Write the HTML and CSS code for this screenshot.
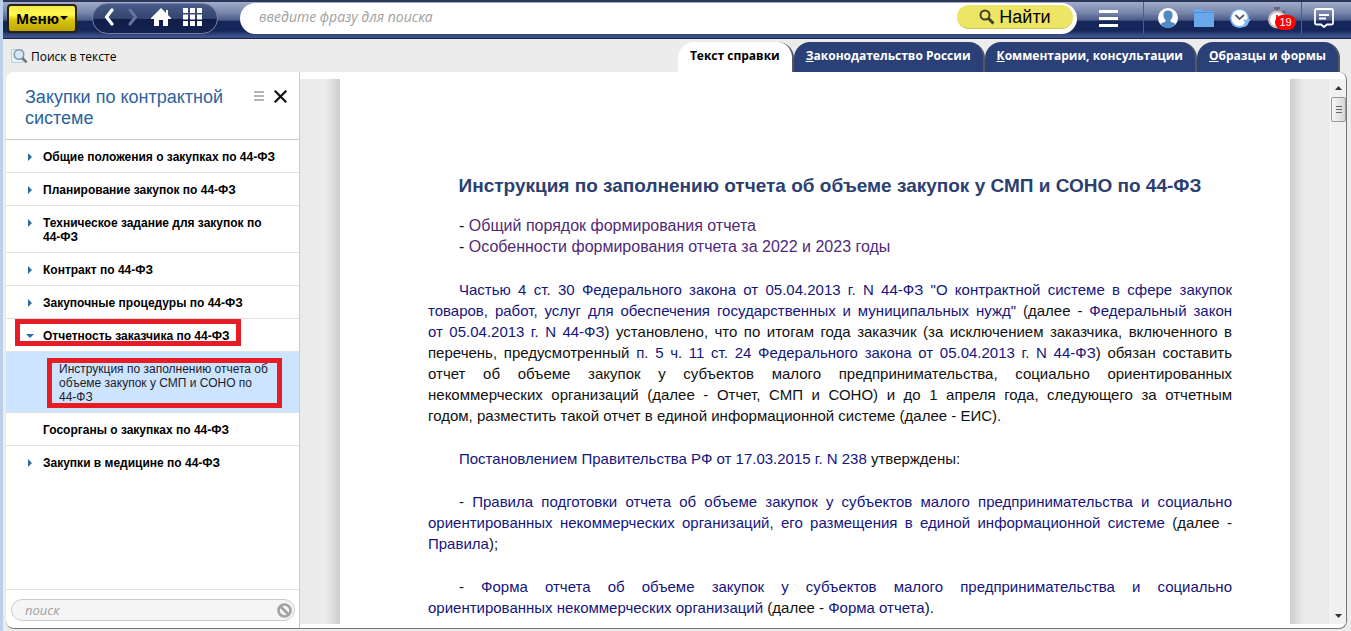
FILE: index.html
```html
<!DOCTYPE html>
<html lang="ru">
<head>
<meta charset="utf-8">
<title>Закупки по контрактной системе</title>
<link rel="stylesheet" href="styles.css">
</head>
<body>
<div class="app">
  <header class="topbar">
    <button class="menu-btn" type="button">Меню<svg width="8" height="4" viewBox="0 0 8 4" aria-hidden="true"><path d="M0 0h8L4 4z"/></svg></button>
    <nav class="nav-pill" aria-label="Навигация">
      <button type="button" aria-label="Назад"><svg width="12" height="18" viewBox="0 0 12 18"><path d="M9 2 3.500 9l5.500 7" fill="none" stroke="#fff" stroke-width="3.200" stroke-linecap="round" stroke-linejoin="round"/></svg></button>
      <button type="button" aria-label="Вперед"><svg width="12" height="18" viewBox="0 0 12 18"><path d="M3 2l5.500 7-5.500 7" fill="none" stroke="#66729a" stroke-width="3" stroke-linecap="round" stroke-linejoin="round"/></svg></button>
      <button type="button" aria-label="Домой"><svg width="20" height="18" viewBox="0 0 20 18"><path d="M10 0l5 5V2h2v5l3 3v1h-3v7h-5v-6H8v6H3v-7H0v-1z" fill="#fff"/></svg></button>
      <button type="button" aria-label="Разделы"><svg width="19" height="18" viewBox="0 0 19 18" fill="#fff"><path d="M0 0h5v5H0zM7 0h5v5H7zM14 0h5v5h-5zM0 6.500h5v5H0zM7 6.500h5v5H7zM14 6.500h5v5h-5zM0 13h5v5H0zM7 13h5v5H7zM14 13h5v5h-5z"/></svg></button>
    </nav>
    <form class="search">
      <input type="text" aria-label="Поиск" placeholder="введите фразу для поиска">
      <button type="button" class="find"><svg width="16" height="16" viewBox="0 0 16 16" aria-hidden="true"><circle cx="6" cy="6" r="4.500" fill="none" stroke="#41402a" stroke-width="2"/><path d="M9.500 9.500l5 5" stroke="#41402a" stroke-width="3"/></svg>Найти</button>
    </form>
    <div class="tools">
      <button type="button" class="t-list" aria-label="Список"><svg width="19" height="17" viewBox="0 0 19 17"><path d="M0 1.500h19M0 8.500h19M0 15.500h19" stroke="#fff" stroke-width="3"/></svg></button>
      <div class="group">
        <button type="button" aria-label="Профиль"><svg width="20" height="20" viewBox="0 0 20 20"><circle cx="10" cy="10" r="10" fill="#fff"/><path d="M10 2.500c3.200 0 5 2.200 4.500 5.500-.3 2-1 3-2 4v1.500l5 2.300A10 10 0 0 1 10 20a10 10 0 0 1-7.500-4.200l5-2.300V12c-1-1-1.700-2-2-4C5 4.700 6.800 2.500 10 2.500z" fill="#4f8ac4"/></svg></button>
        <button type="button" aria-label="Папки"><svg width="20" height="18" viewBox="0 0 20 18"><path d="M0 0h7l2 2h11v16H0z" fill="#6aa8ec"/><path d="M0 3.500h20" stroke="#4b8fd8"/></svg></button>
        <button type="button" aria-label="История"><svg width="21" height="19" viewBox="0 0 21 19"><circle cx="9.500" cy="9.500" r="9.500" fill="#7db6f3"/><circle cx="9.500" cy="9" r="8" fill="#fff"/><path d="M5.500 6l4 4 4.500-4" fill="none" stroke="#555f70" stroke-width="1.800"/><path d="M21 10l-8 1 2 2-2 4 2 1q3-1.500 4-5z" fill="#7db6f3"/></svg></button>
        <button type="button" class="timer" aria-label="Контроль"><svg width="20" height="22" viewBox="0 0 20 22"><path d="M7 1h6M10 1v4M16 4l2 2" stroke="#62666f" stroke-width="2.500"/><circle cx="10" cy="12.500" r="9" fill="#c9c4c0"/><circle cx="10" cy="12.500" r="6.800" fill="#fff"/><path d="M10 8v5" stroke="#a44" stroke-width="2"/></svg><span class="badge">19</span></button>
      </div>
      <button type="button" class="t-chat" aria-label="Сообщения"><svg width="20" height="20" viewBox="0 0 20 20"><path d="M2.500 1h15q1.500 0 1.500 1.500V15q0 1.500-1.500 1.500H13L10 19l-3-2.500H2.500Q1 16.500 1 15V2.500Q1 1 2.500 1zM5 7h10M5 10.500h7" fill="none" stroke="#fff" stroke-width="1.800"/></svg></button>
    </div>
  </header>

  <div class="subbar">
    <button type="button" class="text-search"><svg width="17" height="16" viewBox="0 0 17 16" aria-hidden="true"><path d="M.5 1.500h11v13H.5z" fill="#e9f2f5" stroke="#b9cdd4"/><circle cx="8" cy="6.500" r="4.800" fill="#d4e8f7" stroke="#8096a6" stroke-width="1.500"/><path d="M11.500 10l4 4.500" stroke="#6b7278" stroke-width="2.600"/></svg>Поиск в тексте</button>
    <nav class="tabs">
      <a href="#" class="tab active">Текст справки</a>
      <a href="#" class="tab"><u>З</u>аконодательство России</a>
      <a href="#" class="tab"><u>К</u>омментарии, консультации</a>
      <a href="#" class="tab"><u>О</u>бразцы и формы</a>
    </nav>
  </div>

  <div class="main">
    <aside class="side">
      <div class="side-head">
        <h2>Закупки по контрактной системе</h2>
        <button type="button" aria-label="Настройки"><svg width="10" height="10" viewBox="0 0 10 10"><path d="M0 1h10M0 5h10M0 9h10" stroke="#b5b5b5" stroke-width="2"/></svg></button>
        <button type="button" aria-label="Закрыть"><svg width="13" height="13" viewBox="0 0 13 13"><path d="M.7.700l11.600 11.600M12.300.700.700 12.300" stroke="#111" stroke-width="2.200"/></svg></button>
      </div>
      <ul class="tree">
        <li><a href="#" class="node">Общие положения о закупках по 44-ФЗ</a></li>
        <li><a href="#" class="node">Планирование закупок по 44-ФЗ</a></li>
        <li><a href="#" class="node">Техническое задание для закупок по 44-ФЗ</a></li>
        <li><a href="#" class="node">Контракт по 44-ФЗ</a></li>
        <li><a href="#" class="node">Закупочные процедуры по 44-ФЗ</a></li>
        <li class="marked"><a href="#" class="node open">Отчетность заказчика по 44-ФЗ</a></li>
        <li class="selected"><a href="#">Инструкция по заполнению отчета об объеме закупок у СМП и СОНО по <span class="nobr">44-ФЗ</span></a></li>
        <li><a href="#" class="node leaf">Госорганы о закупках по 44-ФЗ</a></li>
        <li class="last"><a href="#" class="node">Закупки в медицине по 44-ФЗ</a></li>
      </ul>
      <div class="side-search">
        <div class="side-field">
          <input type="text" aria-label="Поиск по дереву" placeholder="поиск">
          <button type="button" aria-label="Очистить"><svg width="15" height="15" viewBox="0 0 15 15"><circle cx="7.500" cy="7.500" r="6" fill="#f5f5f5" stroke="#a2a2a2" stroke-width="2.600"/><path d="M3.500 3.500l8 8" stroke="#a2a2a2" stroke-width="2.600"/></svg></button>
        </div>
      </div>
    </aside>

    <div class="viewer">
      <div class="gutter left"></div>
      <article class="doc">
        <h1>Инструкция по заполнению отчета об объеме закупок у СМП и СОНО по 44-ФЗ</h1>
        <ul class="toc">
          <li>- <a href="#">Общий порядок формирования отчета</a></li>
          <li>- <a href="#">Особенности формирования отчета за 2022 и 2023 годы</a></li>
        </ul>
        <p><a href="#">Частью 4 ст. 30 Федерального закона от 05.04.2013 г. N 44-ФЗ "О контрактной системе в сфере закупок товаров, работ, услуг для обеспечения государственных и муниципальных нужд"</a> (далее - <a href="#">Федеральный закон от&nbsp;05.04.2013 г. N 44-ФЗ</a>) установлено, что по итогам года заказчик (за исключением заказчика, включенного в перечень, предусмотренный <a href="#">п. 5 ч. 11 ст. 24 Федерального закона от 05.04.2013 г. N 44-ФЗ</a>) обязан составить отчет об объеме закупок у субъектов малого предпринимательства, социально ориентированных некоммерческих&nbsp;организаций (далее - Отчет, СМП и СОНО) и до 1 апреля года, следующего за отчетным годом,&nbsp;разместить такой отчет в единой информационной системе (далее - ЕИС).</p>
        <p><a href="#">Постановлением Правительства РФ от 17.03.2015 г. N 238</a> утверждены:</p>
        <p>- <a href="#">Правила подготовки отчета об объеме закупок у субъектов малого предпринимательства и социально ориентированных некоммерческих организаций, его размещения в единой информационной системе</a> (далее - <a href="#">Правила</a>);</p>
        <p>- <a href="#">Форма отчета об объеме закупок у субъектов малого предпринимательства и социально ориентированных&nbsp;некоммерческих организаций</a> (далее - <a href="#">Форма отчета</a>).</p>
      </article>
      <div class="gutter right"></div>
      <div class="scroll">
        <button type="button" aria-label="Вверх"><svg width="7" height="4" viewBox="0 0 7 4"><path d="M0 4h7L3.500 0z" fill="#333"/></svg></button>
        <div class="thumb"></div>
        <button type="button" class="down" aria-label="Вниз"><svg width="7" height="4" viewBox="0 0 7 4"><path d="M0 0h7L3.500 4z" fill="#333"/></svg></button>
      </div>
    </div>
  </div>
</div>
</body>
</html>
```
FILE: styles.css
```css
*, *::before, *::after { box-sizing: border-box; }
body {
  margin: 0;
  font-family: "Liberation Sans", Arial, sans-serif;
  color: #111;
  background: #ececec;
}
button { border: 0; padding: 0; background: none; font: inherit; color: inherit; display: flex; align-items: center; }
a { color: inherit; text-decoration: none; }
ul { list-style: none; margin: 0; padding: 0; }
svg { display: block; flex: none; }
.nobr { white-space: nowrap; }

.app {
  display: flex;
  flex-direction: column;
  height: 100vh;
  border-left: 3px solid #bcd0ec;
  overflow: hidden;
}

/* top bar */
.topbar {
  flex: none;
  display: flex;
  align-items: center;
  height: 39px;
  padding: 0 17px 4px 4px;
  border-top: 2px solid #2b3658;
  border-bottom: 1px solid #17244c;
  background: linear-gradient(#a3adca 0, #7482a9 32%, #4b5b87 50%, #15265b 54%, #15265b 80%, #3c5087 94%, #3c5087 100%);
}
.menu-btn {
  gap: 1px;
  justify-content: center;
  width: 70px;
  height: 29px;
  border: 2px solid #25220e;
  border-radius: 4px;
  background: linear-gradient(#f5ea50, #fff94c 35%, #d9c70e 55%, #bfa70a);
  font: bold 14px "Open Sans", sans-serif;
  color: #000;
}
.nav-pill {
  display: flex;
  align-items: center;
  width: 126px;
  height: 31px;
  margin-left: 15px;
  padding: 0 15px 2px 10px;
  justify-content: space-between;
  border: 1px solid #7380a6;
  border-radius: 16px;
  background: linear-gradient(#495a86 0, #33446f 50%, #111e4a 52%, #14224f);
}
.search {
  flex: 1;
  display: flex;
  align-items: center;
  height: 31px;
  margin: 0 22px 0 22px;
  padding: 0 4px 3px 19px;
  border-radius: 16px;
  background: #fff;
}
.search input {
  flex: 1;
  min-width: 0;
  border: 0;
  padding: 0;
  outline: 0;
  background: none;
  font: italic 14px "Open Sans", sans-serif;
}
.search input::placeholder, .side-field input::placeholder { color: #a0a0a0; opacity: 1; }
.find {
  gap: 4px;
  justify-content: center;
  width: 116px;
  height: 24px;
  padding-top: 2px;
  border-radius: 12px;
  background: #ece566;
  border-bottom: 1px solid #cfc650;
  font-size: 18px;
  color: #000;
}
.tools { display: flex; align-items: center; height: 100%; }
.t-list { width: 44px; height: 100%; }
.group {
  display: flex;
  align-items: center;
  gap: 16px;
  height: 100%;
  padding: 0 14px;
  border-left: 1px solid #4c5c8c;
  border-right: 1px solid #4c5c8c;
}
.t-chat { padding-left: 12px; }
.timer { position: relative; }
.badge {
  position: absolute;
  left: 8px;
  top: 8px;
  width: 21px;
  height: 15px;
  border-radius: 8px;
  background: #f00;
  color: #fff;
  font: 11px/15px "Liberation Sans", sans-serif;
  text-align: center;
}

/* second bar */
.subbar {
  flex: none;
  display: flex;
  justify-content: space-between;
  height: 33px;
  padding: 3px 11px 0 8px;
}
.text-search { gap: 3px; height: 28px; font: 12px "Open Sans", sans-serif; color: #000; }
.tabs { display: flex; }
.tab {
  height: 30px;
  padding: 0 12px;
  border-right: 2px solid #56585f;
  border-radius: 16px 16px 0 0;
  background: #2a4077;
  color: #fff;
  font: bold 12px/28px "Open Sans", sans-serif;
}
.tab.active { background: #fff; color: #000; }

/* main area */
.main {
  flex: 1;
  min-height: 0;
  display: flex;
  margin: 0 4px 2px 3px;
  border-right: 1px solid #777;
  border-bottom: 1px solid #777;
  border-radius: 8px;
  background: #fff;
  overflow: hidden;
}
.side {
  flex: none;
  display: flex;
  flex-direction: column;
  width: 294px;
  border-right: 1px solid #ccc;
}
.side-head {
  display: flex;
  align-items: flex-start;
  height: 68px;
  padding: 15px 12px 0 19px;
  border-bottom: 1px solid #c8c8c8;
}
.side-head h2 {
  flex: 1;
  margin: 0;
  font: 18px/21px "Liberation Sans", Arial, sans-serif;
  color: #2a649c;
}
.side-head button { height: 18px; margin-left: 10px; }
.tree { flex: 1; font-size: 12px; line-height: 14px; }
.tree li { border-bottom: 1px solid #e2e2e2; }
.tree .last { border-bottom: 0; }
.node {
  display: flex;
  gap: 11px;
  padding: 10px 24px 8px 22px;
  font-weight: bold;
  color: #000;
}
.node::before {
  content: "";
  flex: none;
  width: 4px;
  height: 8px;
  margin-top: 3px;
  background: #2e6ca6;
  clip-path: polygon(0 0, 100% 50%, 0 100%);
}
.node.open { gap: 9px; }
.node.open::before {
  width: 8px;
  height: 4px;
  margin: 5px 0 0 -2px;
  clip-path: polygon(0 0, 100% 0, 50% 100%);
}
.node.leaf::before { visibility: hidden; }
.marked, .selected { position: relative; }
.marked::after, .selected::after {
  content: "";
  position: absolute;
  left: 9px;
  top: 0;
  width: 226px;
  height: 27px;
  border: 5px solid #e81c24;
  pointer-events: none;
}
.selected { background: #cde4fe; }
.selected a { display: block; padding: 10px 24px 8px 53px; color: #1c1c2e; }
.selected::after { left: 41px; top: 6px; width: 235px; height: 50px; }
.side-search { height: 39px; padding: 9px 4px 8px 5px; border-top: 1px solid #e2e2e2; }
.side-field {
  display: flex;
  align-items: center;
  height: 22px;
  padding: 0 2px 0 13px;
  border: 1px solid #ccc;
  border-radius: 11px;
  background: #f5f5f5;
}
.side-field input {
  flex: 1;
  min-width: 0;
  border: 0;
  padding: 0;
  outline: 0;
  background: none;
  font: italic 13px "Open Sans", sans-serif;
}

/* document */
.viewer { flex: 1; min-width: 0; display: flex; padding: 7px 0 4px; }
.gutter { flex: none; width: 40px; background: linear-gradient(90deg, #ebebeb 65%, #cdcdcd); }
.gutter.right { background: linear-gradient(270deg, #ebebeb 65%, #cdcdcd); }
.doc { flex: 1; min-width: 0; padding: 95px 58px 0 88px; overflow: hidden; font-size: 15px; line-height: 21px; }
.doc h1 {
  margin: 0 0 17px;
  font-size: 19px;
  line-height: 24px;
  text-align: center;
  color: #2b4070;
}
.toc { padding-left: 31px; font-size: 16px; line-height: 21px; }
.toc a { color: #4f2a77; }
.doc p { margin: 22px 0 0; text-indent: 31px; text-align: justify; }
.doc p a { color: #15157c; }
.scroll {
  flex: none;
  display: flex;
  flex-direction: column;
  align-items: center;
  width: 16px;
  padding: 7px 0 6px;
  background: #f0f0f0;
  border-left: 1px solid #fafafa;
}
.thumb {
  width: 15px;
  height: 25px;
  margin-top: 7px;
  border: 1px solid #999;
  border-radius: 2px;
  background:
    repeating-linear-gradient(#666 0 1px, transparent 1px 3px) 4px 8px / 6px 7px no-repeat,
    linear-gradient(90deg, #f7f7f7, #d6d6d6);
}
.down { margin-top: auto; }
```
